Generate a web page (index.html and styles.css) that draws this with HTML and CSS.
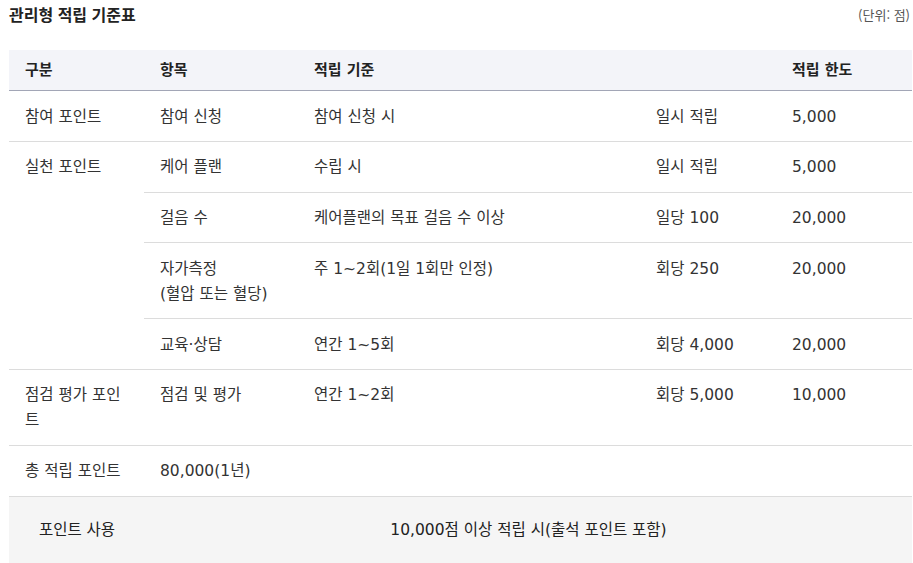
FILE: index.html
```html
<!DOCTYPE html>
<html lang="ko">
<head>
    <meta charset="UTF-8">
    <meta name="viewport" content="width=device-width, initial-scale=1.0">
    <title>관리형 적립 기준표</title>
    <link rel="stylesheet" href="styles.css">
</head>
<body>
    <div class="point-wrap">
        <div class="point-title">
            <h2>관리형 적립 기준표</h2>
            <span class="unit">(단위: 점)</span>
        </div>

        <table class="point-table">
            <colgroup>
                <col class="c1"><col class="c2"><col class="c3"><col class="c4"><col class="c5">
            </colgroup>
            <thead>
                <tr>
                    <th>구분</th>
                    <th>항목</th>
                    <th colspan="2">적립 기준</th>
                    <th>적립 한도</th>
                </tr>
            </thead>
            <tbody>
                <tr>
                    <td>참여 포인트</td>
                    <td>참여 신청</td>
                    <td>참여 신청 시</td>
                    <td>일시 적립</td>
                    <td>5,000</td>
                </tr>
                <tr>
                    <td rowspan="4" class="group">실천 포인트</td>
                    <td>케어 플랜</td>
                    <td>수립 시</td>
                    <td>일시 적립</td>
                    <td>5,000</td>
                </tr>
                <tr>
                    <td>걸음 수</td>
                    <td>케어플랜의 목표 걸음 수 이상</td>
                    <td>일당 100</td>
                    <td>20,000</td>
                </tr>
                <tr>
                    <td>자가측정<br>(혈압 또는 혈당)</td>
                    <td>주 1~2회(1일 1회만 인정)</td>
                    <td>회당 250</td>
                    <td>20,000</td>
                </tr>
                <tr>
                    <td>교육·상담</td>
                    <td>연간 1~5회</td>
                    <td>회당 4,000</td>
                    <td>20,000</td>
                </tr>
                <tr>
                    <td>점검 평가 포인트</td>
                    <td>점검 및 평가</td>
                    <td>연간 1~2회</td>
                    <td>회당 5,000</td>
                    <td>10,000</td>
                </tr>
                <tr class="total">
                    <td>총 적립 포인트</td>
                    <td colspan="4">80,000(1년)</td>
                </tr>
            </tbody>
        </table>

        <table class="use-table">
            <tr>
                <td class="use-label">포인트 사용</td>
                <td>10,000점 이상 적립 시(출석 포인트 포함)</td>
            </tr>
        </table>
    </div>
</body>
</html>
```

FILE: styles.css
```css
body {
    margin: 0;
    background: #fff;
    font-family: "Noto Sans CJK KR", "Noto Sans", sans-serif;
    color: #333;
}

.point-wrap {
    width: 903px;
    padding-left: 9px;
}

.point-title {
    display: flex;
    justify-content: space-between;
    align-items: center;
    height: 28px;
    margin-bottom: 22px;
}

.point-title h2 {
    margin: 0;
    font-size: 16px;
    font-weight: 700;
    color: #222;
}

.point-title .unit {
    font-size: 13px;
    color: #555;
    margin-right: 2px;
}

.point-table,
.use-table {
    width: 903px;
    border-collapse: collapse;
    table-layout: fixed;
    font-family: "DejaVu Sans", "Noto Sans CJK KR", sans-serif;
    font-size: 15.5px;
    line-height: 25px;
}

.c1 { width: 135px; }
.c2 { width: 154px; }
.c3 { width: 342px; }
.c4 { width: 136px; }
.c5 { width: 136px; }

.point-table th {
    background: #f3f4f9;
    border-bottom: 1px solid #a2a6b6;
    padding: 7.5px 16px 7.5px;
    text-align: left;
    font-size: 15px;
    font-weight: 700;
    color: #222;
}

.point-table td {
    padding: 13.5px 16px 11.3px;
    vertical-align: top;
    border-bottom: 1px solid #dcdcdc;
    text-align: left;
}

/* 하단 사용 조건 */
.use-table td {
    background: #f5f5f5;
    padding: 21px 16px 22px;
    text-align: center;
    color: #222;
}

.use-table .use-label {
    width: 136px;
    box-sizing: border-box;
}
```
